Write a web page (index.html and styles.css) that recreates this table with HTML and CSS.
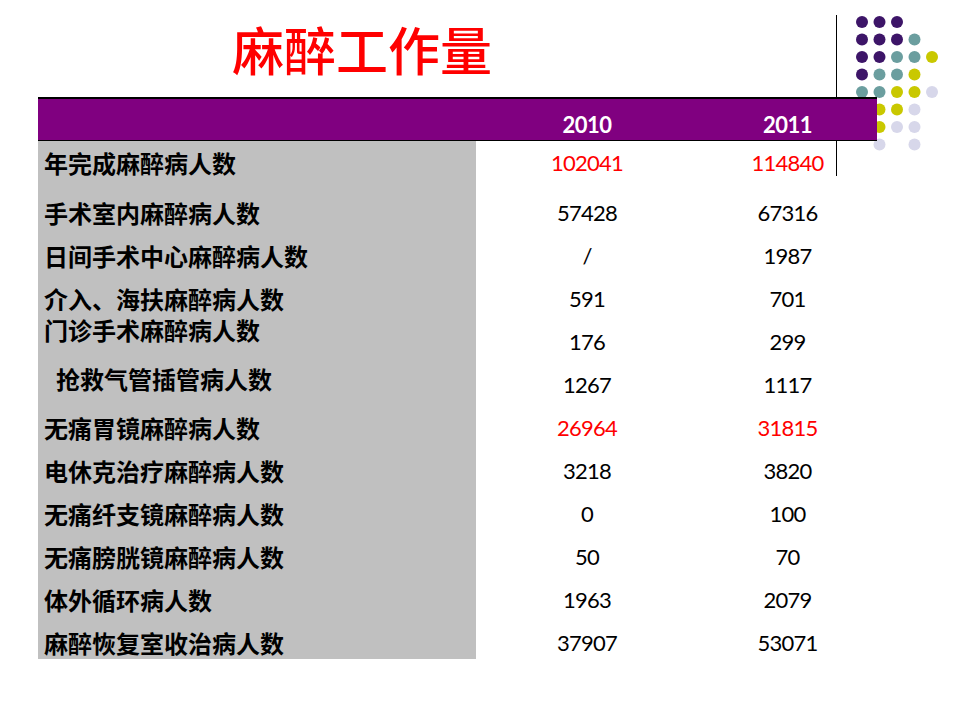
FILE: index.html
```html
<!DOCTYPE html>
<html lang="zh">
<head>
<meta charset="utf-8">
<title>麻醉工作量</title>
<link rel="stylesheet" href="styles.css">
</head>
<body>
<div class="slide">
  <svg class="deco" width="960" height="200" viewBox="0 0 960 200" aria-hidden="true">
    <line x1="836.5" y1="15" x2="836.5" y2="176" stroke="#000" stroke-width="1"/>
    <g fill="#3d1568">
      <circle cx="862" cy="22" r="6"/><circle cx="879.5" cy="22" r="6"/><circle cx="897" cy="22" r="6"/>
      <circle cx="862" cy="39.5" r="6"/><circle cx="879.5" cy="39.5" r="6"/><circle cx="897" cy="39.5" r="6"/>
      <circle cx="862" cy="57" r="6"/><circle cx="879.5" cy="57" r="6"/>
      <circle cx="862" cy="74.5" r="6"/>
    </g>
    <g fill="#6b9e9f">
      <circle cx="914.5" cy="39.5" r="6"/>
      <circle cx="897" cy="57" r="6"/><circle cx="914.5" cy="57" r="6"/>
      <circle cx="879.5" cy="74.5" r="6"/><circle cx="897" cy="74.5" r="6"/>
      <circle cx="862" cy="92" r="6"/><circle cx="879.5" cy="92" r="6"/>
    </g>
    <g fill="#c9c800">
      <circle cx="932" cy="57" r="6"/>
      <circle cx="914.5" cy="74.5" r="6"/>
      <circle cx="897" cy="92" r="6"/><circle cx="914.5" cy="92" r="6"/>
      <circle cx="879.5" cy="109.5" r="6"/><circle cx="897" cy="109.5" r="6"/>
      <circle cx="879.5" cy="127" r="6"/>
    </g>
    <g fill="#d7d7ea">
      <circle cx="932" cy="92" r="6"/>
      <circle cx="914.5" cy="109.5" r="6"/>
      <circle cx="897" cy="127" r="6"/><circle cx="914.5" cy="127" r="6"/>
      <circle cx="879.5" cy="144.5" r="6"/><circle cx="914.5" cy="144.5" r="6"/>
    </g>
  </svg>

  <h1 class="title">麻醉工作量</h1>

  <div class="table">
    <div class="row head">
      <div class="cell"></div>
      <div class="cell num">2010</div>
      <div class="cell num">2011</div>
    </div>
    <div class="row first">
      <div class="cell label">年完成麻醉病人数</div>
      <div class="cell num red">102041</div>
      <div class="cell num red">114840</div>
    </div>
    <div class="row">
      <div class="cell label">手术室内麻醉病人数</div>
      <div class="cell num">57428</div>
      <div class="cell num">67316</div>
    </div>
    <div class="row">
      <div class="cell label">日间手术中心麻醉病人数</div>
      <div class="cell num">/</div>
      <div class="cell num">1987</div>
    </div>
    <div class="row">
      <div class="cell label">介入、海扶麻醉病人数</div>
      <div class="cell num">591</div>
      <div class="cell num">701</div>
    </div>
    <div class="row">
      <div class="cell label raised">门诊手术麻醉病人数</div>
      <div class="cell num">176</div>
      <div class="cell num">299</div>
    </div>
    <div class="row">
      <div class="cell label indent">抢救气管插管病人数</div>
      <div class="cell num">1267</div>
      <div class="cell num">1117</div>
    </div>
    <div class="row">
      <div class="cell label">无痛胃镜麻醉病人数</div>
      <div class="cell num red">26964</div>
      <div class="cell num red">31815</div>
    </div>
    <div class="row">
      <div class="cell label">电休克治疗麻醉病人数</div>
      <div class="cell num">3218</div>
      <div class="cell num">3820</div>
    </div>
    <div class="row">
      <div class="cell label">无痛纤支镜麻醉病人数</div>
      <div class="cell num">0</div>
      <div class="cell num">100</div>
    </div>
    <div class="row">
      <div class="cell label">无痛膀胱镜麻醉病人数</div>
      <div class="cell num">50</div>
      <div class="cell num">70</div>
    </div>
    <div class="row">
      <div class="cell label">体外循环病人数</div>
      <div class="cell num">1963</div>
      <div class="cell num">2079</div>
    </div>
    <div class="row last">
      <div class="cell label">麻醉恢复室收治病人数</div>
      <div class="cell num">37907</div>
      <div class="cell num">53071</div>
    </div>
  </div>
</div>
</body>
</html>
```

FILE: styles.css
```css
html, body {
  margin: 0;
  padding: 0;
  background: #ffffff;
}

.slide {
  position: relative;
  width: 960px;
  height: 720px;
  overflow: hidden;
  background: #ffffff;
  font-family: "Noto Sans CJK SC", "Noto Sans", sans-serif;
}

.deco {
  position: absolute;
  left: 0;
  top: 0;
  z-index: 0;
}

.title {
  position: relative;
  z-index: 1;
  margin: 0;
  height: 97px;
  box-sizing: border-box;
  display: flex;
  align-items: center;
  padding-left: 232px;
  font-family: "Noto Sans CJK SC", sans-serif;
  font-size: 52px;
  line-height: 1;
  font-weight: 500;
  color: #ff0000;
}

.table {
  position: relative;
  z-index: 1;
  margin-left: 38px;
  width: 839px;
  display: flex;
  flex-direction: column;
}

.row {
  display: grid;
  grid-template-columns: 438px 222px 179px;
  grid-template-rows: 100%;
  height: 43px;
  box-sizing: border-box;
}

.cell {
  display: flex;
  align-items: center;
  box-sizing: border-box;
  min-width: 0;
  min-height: 0;
  overflow: visible;
}

.head {
  height: 44px;
  background: #800080;
  border-top: 2px solid #000000;
  border-bottom: 1px solid #000000;
}

.head .cell {
  padding-top: 11px;
}

.head .num {
  color: #ffffff;
  font-weight: 700;
  letter-spacing: -0.5px;
}

.first {
  height: 50px;
}

.first .cell {
  padding-bottom: 6px;
}

.last {
  height: 38px;
}

.last .cell {
  padding-top: 5px;
}

.label {
  background: #c0c0c0;
  padding-left: 6px;
  font-family: "Noto Sans CJK SC", sans-serif;
  font-size: 24px;
  line-height: 1;
  font-weight: 700;
  color: #000000;
  white-space: nowrap;
}

.label.raised {
  padding-bottom: 23px;
  line-height: 20px;
}

.label.indent {
  padding-left: 18px;
  padding-bottom: 12px;
}

.num {
  justify-content: center;
  font-family: "Lato", "Liberation Sans", sans-serif;
  font-size: 22px;
  line-height: 1;
  letter-spacing: -0.8px;
  color: #000000;
}

.num.red {
  color: #ff0000;
}
```
